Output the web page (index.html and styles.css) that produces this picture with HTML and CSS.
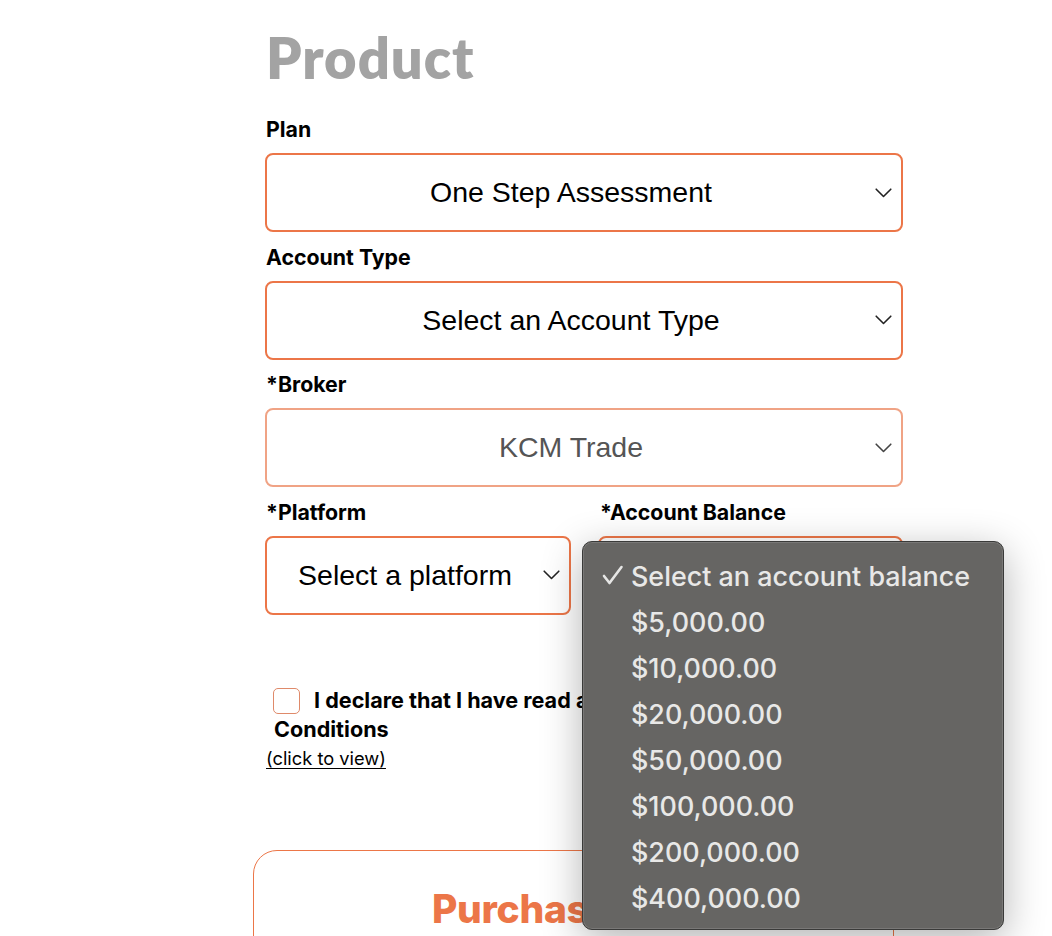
FILE: index.html
```html
<!DOCTYPE html>
<html lang="en">
<head>
<meta charset="utf-8">
<title>Product</title>
<link rel="stylesheet" href="styles.css">
</head>
<body>
<main class="page">
  <h1 class="title">Product</h1>

  <div class="field first">
    <div class="label">Plan</div>
    <div class="select">
      <span class="select-text">One Step Assessment</span>
      <svg class="chev" width="17" height="10" viewBox="0 0 17 10"><path d="M1.2 1.2 L8.5 8.5 L15.8 1.2" fill="none" stroke="#222" stroke-width="1.6" stroke-linecap="round" stroke-linejoin="round"/></svg>
    </div>
  </div>

  <div class="field">
    <div class="label">Account Type</div>
    <div class="select">
      <span class="select-text">Select an Account Type</span>
      <svg class="chev" width="17" height="10" viewBox="0 0 17 10"><path d="M1.2 1.2 L8.5 8.5 L15.8 1.2" fill="none" stroke="#222" stroke-width="1.6" stroke-linecap="round" stroke-linejoin="round"/></svg>
    </div>
  </div>

  <div class="field">
    <div class="label">*Broker</div>
    <div class="select disabled">
      <span class="select-text">KCM Trade</span>
      <svg class="chev" width="17" height="10" viewBox="0 0 17 10"><path d="M1.2 1.2 L8.5 8.5 L15.8 1.2" fill="none" stroke="#444" stroke-width="1.6" stroke-linecap="round" stroke-linejoin="round"/></svg>
    </div>
  </div>

  <div class="row">
    <div class="field half">
      <div class="label">*Platform</div>
      <div class="select">
        <span class="select-text">Select a platform</span>
        <svg class="chev" width="17" height="10" viewBox="0 0 17 10"><path d="M1.2 1.2 L8.5 8.5 L15.8 1.2" fill="none" stroke="#222" stroke-width="1.6" stroke-linecap="round" stroke-linejoin="round"/></svg>
      </div>
    </div>
    <div class="field half balance">
      <div class="label">*Account Balance</div>
      <div class="select">
        <span class="select-text">Select an account balance</span>
      </div>
      <div class="popup">
        <div class="opt selected"><span class="check"><svg width="22" height="20" viewBox="0 0 22 20"><path d="M2 11 L7.5 18 L19.5 2" fill="none" stroke="#e6e6e5" stroke-width="2.6" stroke-linecap="round" stroke-linejoin="round"/></svg></span>Select an account balance</div>
        <div class="opt"><span class="check"></span>$5,000.00</div>
        <div class="opt"><span class="check"></span>$10,000.00</div>
        <div class="opt"><span class="check"></span>$20,000.00</div>
        <div class="opt"><span class="check"></span>$50,000.00</div>
        <div class="opt"><span class="check"></span>$100,000.00</div>
        <div class="opt"><span class="check"></span>$200,000.00</div>
        <div class="opt"><span class="check"></span>$400,000.00</div>
      </div>
    </div>
  </div>

  <div class="terms">
    <label class="terms-text"><span class="box"></span>I declare that I have read and agree to the Terms and<br>Conditions</label>
    <a class="view" href="#">(click to view)</a>
  </div>

  <section class="card">
    <h2 class="card-title">Purchase Total</h2>
  </section>
</main>
</body>
</html>
```

FILE: styles.css
```css
html, body {
  margin: 0;
  padding: 0;
  background: #ffffff;
}

body {
  font-family: "Inter", "Noto Sans", sans-serif;
  color: #000;
  overflow: hidden;
  height: 936px;
}

.page {
  width: 638px;
  margin-left: 265px;
  padding-top: 26px;
}

.title {
  margin: 0;
  height: 64px;
  font-family: "Lato", "Noto Sans", sans-serif;
  font-size: 56px;
  line-height: 64px;
  font-weight: 800;
  color: #a3a3a3;
  letter-spacing: 1px;
  padding-left: 1px;
}

.field {
  display: flex;
  flex-direction: column;
}

.label {
  height: 24px;
  font-size: 21.3px;
  line-height: 24px;
  font-weight: 700;
  margin-top: 12.5px;
  margin-bottom: 12px;
  padding-left: 1px;
  white-space: nowrap;
}

.first .label {
  margin-top: 27px;
}

.select {
  box-sizing: border-box;
  height: 79px;
  border: 2px solid #ec7648;
  border-radius: 8px;
  display: flex;
  align-items: center;
  padding: 0 9px 0 0;
  font-family: "Liberation Sans", Arial, sans-serif;
  font-size: 28.5px;
  color: #000;
  background: #fff;
  overflow: hidden;
}

.select-text {
  flex: 1;
  text-align: center;
  white-space: nowrap;
}

.chev {
  flex: none;
  display: block;
}

.select.disabled {
  border-color: #f0a385;
  color: #555555;
}

.row {
  display: flex;
  gap: 27px;
}

.half {
  width: 306px;
}

.balance {
  position: relative;
  width: 305px;
}

.balance .label {
  padding-left: 2px;
}

.popup {
  position: absolute;
  left: -16px;
  top: 54px;
  width: 422px;
  height: 389px;
  box-sizing: border-box;
  background: #666563;
  border: 1px solid #3a3a39;
  border-radius: 10px;
  box-shadow: inset 0 0 0 1px rgba(255,255,255,0.13), 0 10px 40px rgba(0,0,0,0.30);
  padding-top: 11px;
  font-family: "Inter", "Noto Sans", sans-serif;
  color: #e8e8e7;
  font-size: 26.9px;
  font-weight: 500;
  z-index: 5;
}

.opt {
  height: 46px;
  line-height: 46px;
  display: flex;
  align-items: center;
  padding-left: 19px;
  white-space: nowrap;
}

.check {
  display: flex;
  align-items: center;
  width: 29px;
  height: 46px;
  flex: none;
}

.check svg {
  display: block;
  margin-top: -2px;
}

.terms {
  margin-top: 71px;
}

.terms-text {
  display: block;
  font-size: 21.6px;
  line-height: 29px;
  font-weight: 700;
  padding-left: 9px;
}

.box {
  display: inline-block;
  box-sizing: border-box;
  width: 27px;
  height: 26px;
  border: 1px solid #df8a6a;
  border-radius: 5px;
  vertical-align: -6px;
  margin-left: -1px;
  margin-right: 14px;
}

.view {
  display: inline-block;
  font-size: 18.3px;
  line-height: 22px;
  color: #000;
  text-decoration: underline;
  text-decoration-thickness: 1px;
  text-underline-offset: 3px;
  font-weight: 400;
  margin-top: 3px;
  padding-left: 1px;
}

.card {
  box-sizing: border-box;
  margin-left: -12px;
  margin-top: 81.5px;
  width: 641px;
  height: 200px;
  border: 1px solid #ec7648;
  border-radius: 24px;
  text-align: center;
}

.card-title {
  margin: 38px 0 0;
  font-size: 39px;
  line-height: 40px;
  font-weight: 800;
  color: #ec7648;
  letter-spacing: -0.3px;
}
```
